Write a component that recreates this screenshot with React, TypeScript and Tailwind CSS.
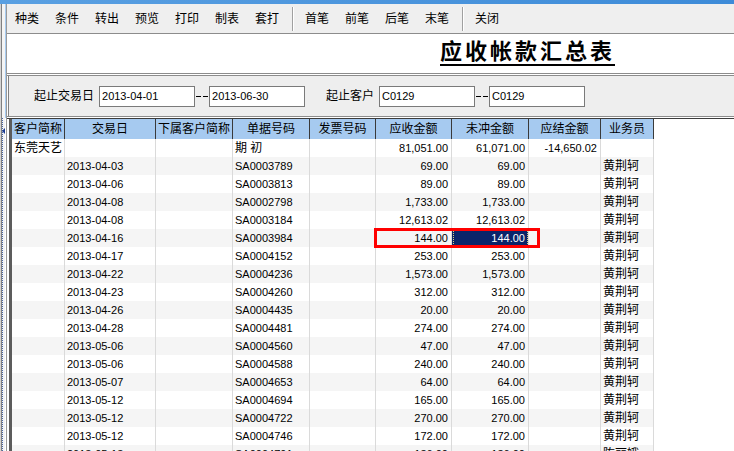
import React from 'react'

const FONT = "font-['Liberation_Sans','Noto_Sans_CJK_SC',sans-serif]"

const TOOLS_A = ['种类', '条件', '转出', '预览', '打印', '制表', '套打']
const TOOLS_B = ['首笔', '前笔', '后笔', '末笔']

const COLUMNS = [
  { title: '客户简称', w: 'w-[53px]', right: false },
  { title: '交易日', w: 'w-[91px]', right: false },
  { title: '下属客户简称', w: 'w-[77px]', right: false },
  { title: '单据号码', w: 'w-[77px]', right: false },
  { title: '发票号码', w: 'w-[66px]', right: false },
  { title: '应收金额', w: 'w-[76px]', right: true },
  { title: '未冲金额', w: 'w-[77px]', right: true },
  { title: '应结金额', w: 'w-[72px]', right: true },
  { title: '业务员', w: 'w-[53px]', right: false },
]

const ROWS: string[][] = [
  ['东莞天艺', '', '', '期 初', '', '81,051.00', '61,071.00', '-14,650.02', ''],
  ['', '2013-04-03', '', 'SA0003789', '', '69.00', '69.00', '', '黄荆轲'],
  ['', '2013-04-06', '', 'SA0003813', '', '89.00', '89.00', '', '黄荆轲'],
  ['', '2013-04-08', '', 'SA0002798', '', '1,733.00', '1,733.00', '', '黄荆轲'],
  ['', '2013-04-08', '', 'SA0003184', '', '12,613.02', '12,613.02', '', '黄荆轲'],
  ['', '2013-04-16', '', 'SA0003984', '', '144.00', '144.00', '', '黄荆轲'],
  ['', '2013-04-17', '', 'SA0004152', '', '253.00', '253.00', '', '黄荆轲'],
  ['', '2013-04-22', '', 'SA0004236', '', '1,573.00', '1,573.00', '', '黄荆轲'],
  ['', '2013-04-23', '', 'SA0004260', '', '312.00', '312.00', '', '黄荆轲'],
  ['', '2013-04-26', '', 'SA0004435', '', '20.00', '20.00', '', '黄荆轲'],
  ['', '2013-04-28', '', 'SA0004481', '', '274.00', '274.00', '', '黄荆轲'],
  ['', '2013-05-06', '', 'SA0004560', '', '47.00', '47.00', '', '黄荆轲'],
  ['', '2013-05-06', '', 'SA0004588', '', '240.00', '240.00', '', '黄荆轲'],
  ['', '2013-05-07', '', 'SA0004653', '', '64.00', '64.00', '', '黄荆轲'],
  ['', '2013-05-12', '', 'SA0004694', '', '165.00', '165.00', '', '黄荆轲'],
  ['', '2013-05-12', '', 'SA0004722', '', '270.00', '270.00', '', '黄荆轲'],
  ['', '2013-05-12', '', 'SA0004746', '', '172.00', '172.00', '', '黄荆轲'],
  ['', '2013-05-13', '', 'SA0004791', '', '136.00', '136.00', '', '陈丽娥'],
]

const isAscii = (s: string) => /^[\x00-\x7f]*$/.test(s)

function LeftStrip() {
  return (
    <div className="flex w-[7px] shrink-0">
      <div className="w-px bg-[#d4d4d4]" />
      <div className="w-px bg-[#808080]" />
      <div className="flex w-[3px] flex-col bg-[#f4f4f4]">
        <div className="h-[114px] shrink-0" />
        <div className="relative flex-1 border-l border-dotted border-[#4a68a8]">
          <div className="absolute left-[-1px] top-[10px] h-0 w-0 border-y-[3px] border-r-[3px] border-y-transparent border-r-[#1c3c90]" />
        </div>
      </div>
      <div className="flex w-px flex-col">
        <div className="h-[114px] shrink-0 bg-[#a8ccf0]" />
        <div className="flex-1 bg-white" />
      </div>
      <div className="w-px bg-[#9a9a9a]" />
    </div>
  )
}

function Toolbar() {
  return (
    <div className="flex h-[30px] shrink-0 items-center border-b border-[#8c8c8c] bg-[#efefef] text-[12px]">
      {TOOLS_A.map((t) => (
        <div key={t} className="w-[40px] text-center">
          {t}
        </div>
      ))}
      <div className="ml-[5px] mr-[3px] h-[24px] w-[2px] border-l border-r border-l-[#a0a0a0] border-r-white" />
      {TOOLS_B.map((t) => (
        <div key={t} className="w-[40px] text-center">
          {t}
        </div>
      ))}
      <div className="ml-[5px] mr-[3px] h-[24px] w-[2px] border-l border-r border-l-[#a0a0a0] border-r-white" />
      <div className="w-[40px] text-center">关闭</div>
    </div>
  )
}

function TitleArea() {
  return (
    <>
      <div className="flex h-[39px] shrink-0 items-center pl-[433px]">
        <span className="border-b-2 border-black pb-[1px] text-[22px] font-semibold leading-none tracking-[3px]">
          应收帐款汇总表
        </span>
      </div>
      <div className="h-[3px] shrink-0 border-y border-[#8c8c8c] bg-white" />
    </>
  )
}

function Field({ value }: { value: string }) {
  return (
    <div className="flex h-[21px] w-[96px] items-center border border-[#7a7a7a] bg-white pl-[2px] text-[11px]">
      {value}
    </div>
  )
}

function Dash() {
  return (
    <div className="flex w-[14px] items-center justify-center gap-[2px]">
      <div className="h-px w-[5px] bg-black" />
      <div className="h-px w-[5px] bg-black" />
    </div>
  )
}

function FilterPanel() {
  return (
    <>
      <div className="ml-px flex h-[40px] shrink-0 items-center border-l border-[#808080] bg-[#eeeeee] pl-[25px] text-[12px]">
        <span className="mr-[5px]">起止交易日</span>
        <Field value="2013-04-01" />
        <Dash />
        <Field value="2013-06-30" />
        <span className="ml-[21px] mr-[5px]">起止客户</span>
        <Field value="C0129" />
        <Dash />
        <Field value="C0129" />
      </div>
      <div className="h-[3px] shrink-0 border-t border-b border-t-[#8c8c8c] border-b-[#3c3c3c] bg-white" />
    </>
  )
}

function Grid() {
  return (
    <div className="ml-[2px] flex min-h-0 flex-1 flex-col border-l-[3px] border-[#5c5c5c]">
      <div className="flex h-[20px] shrink-0">
        {COLUMNS.map((col) => (
          <div
            key={col.title}
            className={`${col.w} flex shrink-0 items-center justify-center border-r border-[#3a3a3a] bg-[#a6caf0] text-[12px]`}
          >
            {col.title}
          </div>
        ))}
      </div>
      {ROWS.map((row, i) => (
        <div key={`row_${i}`} className="flex h-[18px] shrink-0">
          {COLUMNS.map((col, j) => {
            const v = row[j]
            const selected = i === 5 && j === 6
            return (
              <div
                key={`cell_${i}_${j}`}
                className={`${col.w} flex shrink-0 items-center overflow-hidden whitespace-nowrap border-r border-[#dadada] ${
                  col.right ? 'justify-end pr-[3px]' : 'pl-[2px]'
                } ${isAscii(v) ? 'text-[11px]' : 'text-[12px]'} ${
                  selected
                    ? 'bg-[#0a246a] text-white outline-1 -outline-offset-2 outline-dotted outline-[#d8d080]'
                    : i % 2
                      ? 'bg-[#f5f5f5]'
                      : 'bg-white'
                }`}
              >
                {v}
              </div>
            )
          })}
        </div>
      ))}
    </div>
  )
}

export default function App() {
  return (
    <div className={`relative flex h-[451px] w-[734px] flex-col overflow-hidden bg-white text-black ${FONT}`}>
      <div className="h-[4px] shrink-0 bg-gradient-to-r from-[#5aa0e2] to-[#3d8bd8]" />
      <div className="flex min-h-0 flex-1">
        <LeftStrip />
        <div className="flex min-w-0 flex-1 flex-col">
          <Toolbar />
          <TitleArea />
          <FilterPanel />
          <Grid />
        </div>
      </div>
      <div className="absolute left-[374px] top-[228px] h-[20px] w-[166px] border-[3px] border-[#ff0000]" />
    </div>
  )
}
